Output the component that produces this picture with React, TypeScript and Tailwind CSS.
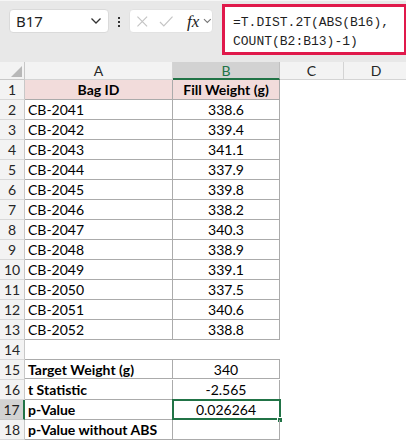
import React from "react";

const rows: [string, string][] = [
  ["CB-2041", "338.6"],
  ["CB-2042", "339.4"],
  ["CB-2043", "341.1"],
  ["CB-2044", "337.9"],
  ["CB-2045", "339.8"],
  ["CB-2046", "338.2"],
  ["CB-2047", "340.3"],
  ["CB-2048", "338.9"],
  ["CB-2049", "339.1"],
  ["CB-2050", "337.5"],
  ["CB-2051", "340.6"],
  ["CB-2052", "338.8"],
];

const stats: [string, string][] = [
  ["Target Weight (g)", "340"],
  ["t Statistic", "-2.565"],
  ["p-Value", "0.026264"],
  ["p-Value without ABS", ""],
];

function RowHead({ n, active }: { n: number; active?: boolean }) {
  return (
    <div
      className={
        active
          ? "h-[20px] flex items-center justify-center bg-[#d2d2d2] border-b border-[#c8c8c8] border-r-2 border-r-[#217346] text-[#1f1f1f]"
          : "h-[20px] flex items-center justify-center bg-[#f3f3f3] border-b border-[#d8d8d8] border-r border-r-[#c8c8c8] text-[#262626]"
      }
    >
      {n}
    </div>
  );
}

export default function App() {
  return (
    <div
      className="w-[406px] h-[442px] overflow-hidden bg-white text-[14px] text-black"
      style={{ fontFamily: "Lato, 'Noto Sans', sans-serif" }}
    >
      {/* Formula bar */}
      <div className="h-[62px] bg-[#e8e8e8] border-t border-[#f6f6f6] flex items-start relative">
        <div className="mt-[8px] ml-[9px] w-[100px] h-[24px] bg-white rounded-[4px] border border-[#dadada] flex items-center justify-between pl-[6px] pr-[6px]">
          <span className="text-[15px] text-[#1f1f1f]" style={{ fontFamily: "'Noto Sans', sans-serif" }}>B17</span>
          <svg width="12" height="8" viewBox="0 0 12 8" fill="none" stroke="#333" strokeWidth="1.3">
            <path d="M1.5 1.5 L6 6 L10.5 1.5" />
          </svg>
        </div>
        <div className="mt-[16px] ml-[9px] flex flex-col gap-[2px]">
          <div className="w-[2px] h-[2px] bg-[#333]" />
          <div className="w-[2px] h-[2px] bg-[#333]" />
          <div className="w-[2px] h-[2px] bg-[#333]" />
        </div>
        <div className="mt-[8px] ml-[9px] w-[84px] h-[24px] bg-white rounded-[4px] border border-[#e2e2e2] flex items-center pl-[6px]">
          <svg width="13" height="13" viewBox="0 0 13 13" stroke="#c4c4c4" strokeWidth="1.2" fill="none">
            <path d="M1.5 1.5 L11.5 11.5 M11.5 1.5 L1.5 11.5" />
          </svg>
          <svg className="ml-[10px]" width="15" height="13" viewBox="0 0 15 13" stroke="#c4c4c4" strokeWidth="1.2" fill="none">
            <path d="M1 7 L5 11 L14 1.5" />
          </svg>
          <span className="ml-[14px] italic text-[17px] leading-none text-[#222]" style={{ fontFamily: "'Liberation Serif', serif" }}>
            fx
          </span>
          <svg className="ml-[4px]" width="9" height="6" viewBox="0 0 9 6" fill="none" stroke="#777" strokeWidth="1.1">
            <path d="M1 1 L4.5 4.5 L8 1" />
          </svg>
        </div>
        <div
          className="absolute left-[222px] top-[3px] w-[185px] h-[51px] bg-white border-[3px] border-[#e0194b] pl-[8px] pt-[6px] text-[13px] leading-[19px] text-[#1f1f1f] whitespace-pre"
          style={{ fontFamily: "'Liberation Mono', monospace" }}
        >
          {"=T.DIST.2T(ABS(B16),\nCOUNT(B2:B13)-1)"}
        </div>
      </div>

      {/* Grid */}
      <div className="grid grid-cols-[25px_148px_107px_64px_64px]">
        {/* Header row */}
        <div className="h-[18px] bg-[#f3f3f3] border-r border-b border-[#c8c8c8] relative">
          <svg className="absolute right-[2px] bottom-[2px]" width="11" height="11" viewBox="0 0 11 11">
            <path d="M11 0 L11 11 L0 11 Z" fill="#b8b8b8" />
          </svg>
        </div>
        <div className="h-[18px] bg-[#f3f3f3] border-r border-b border-[#d4d4d4] flex items-center justify-center text-[#262626]">A</div>
        <div className="h-[18px] bg-[#d2d2d2] border-r border-[#c0c0c0] border-b-2 border-b-[#217346] flex items-center justify-center text-[#217346]">B</div>
        <div className="h-[18px] bg-[#f3f3f3] border-r border-b border-[#d4d4d4] flex items-center justify-center text-[#262626]">C</div>
        <div className="h-[18px] bg-[#f3f3f3] border-b border-[#d4d4d4] flex items-center justify-center text-[#262626]">D</div>

        {/* Row 1 */}
        <RowHead n={1} />
        <div className="h-[20px] bg-[#f2dcdb] border-r border-b border-[#ababab] flex items-center justify-center font-bold">Bag ID</div>
        <div className="h-[20px] bg-[#f2dcdb] border-r border-b border-[#ababab] flex items-center justify-center font-bold">Fill Weight (g)</div>
        <div className="h-[20px]" />
        <div className="h-[20px]" />

        {rows.map(([id, w], i) => (
          <React.Fragment key={id}>
            <RowHead n={i + 2} />
            <div className="h-[20px] border-r border-b border-[#ababab] flex items-center pl-[3px]">{id}</div>
            <div className="h-[20px] border-r border-b border-[#ababab] flex items-center justify-center">{w}</div>
            <div className="h-[20px]" />
            <div className="h-[20px]" />
          </React.Fragment>
        ))}

        {/* Row 14 */}
        <RowHead n={14} />
        <div className="h-[20px]" />
        <div className="h-[20px]" />
        <div className="h-[20px]" />
        <div className="h-[20px]" />

        {stats.map(([label, v], i) => (
          <React.Fragment key={label}>
            <RowHead n={i + 15} active={i === 2} />
            <div
              className={
                "h-[20px] border-r border-b border-[#ababab] flex items-center pl-[3px] font-bold" +
                (i === 0 ? " border-t border-t-[#ababab] -mt-px" : "")
              }
            >
              {label}
            </div>
            <div
              className={
                "h-[20px] border-r border-b border-[#ababab] flex items-center justify-center relative" +
                (i === 0 ? " border-t border-t-[#ababab] -mt-px" : "")
              }
            >
              {v}
              {i === 2 && (
                <>
                  <div className="absolute left-[-1px] top-[-1px] right-[-2px] bottom-[-1px] border-2 border-[#217346]" />
                  <div className="absolute right-[-4px] bottom-[-4px] w-[6px] h-[6px] bg-[#217346] border border-white" />
                </>
              )}
            </div>
            <div className="h-[20px]" />
            <div className="h-[20px]" />
          </React.Fragment>
        ))}
      </div>
    </div>
  );
}
